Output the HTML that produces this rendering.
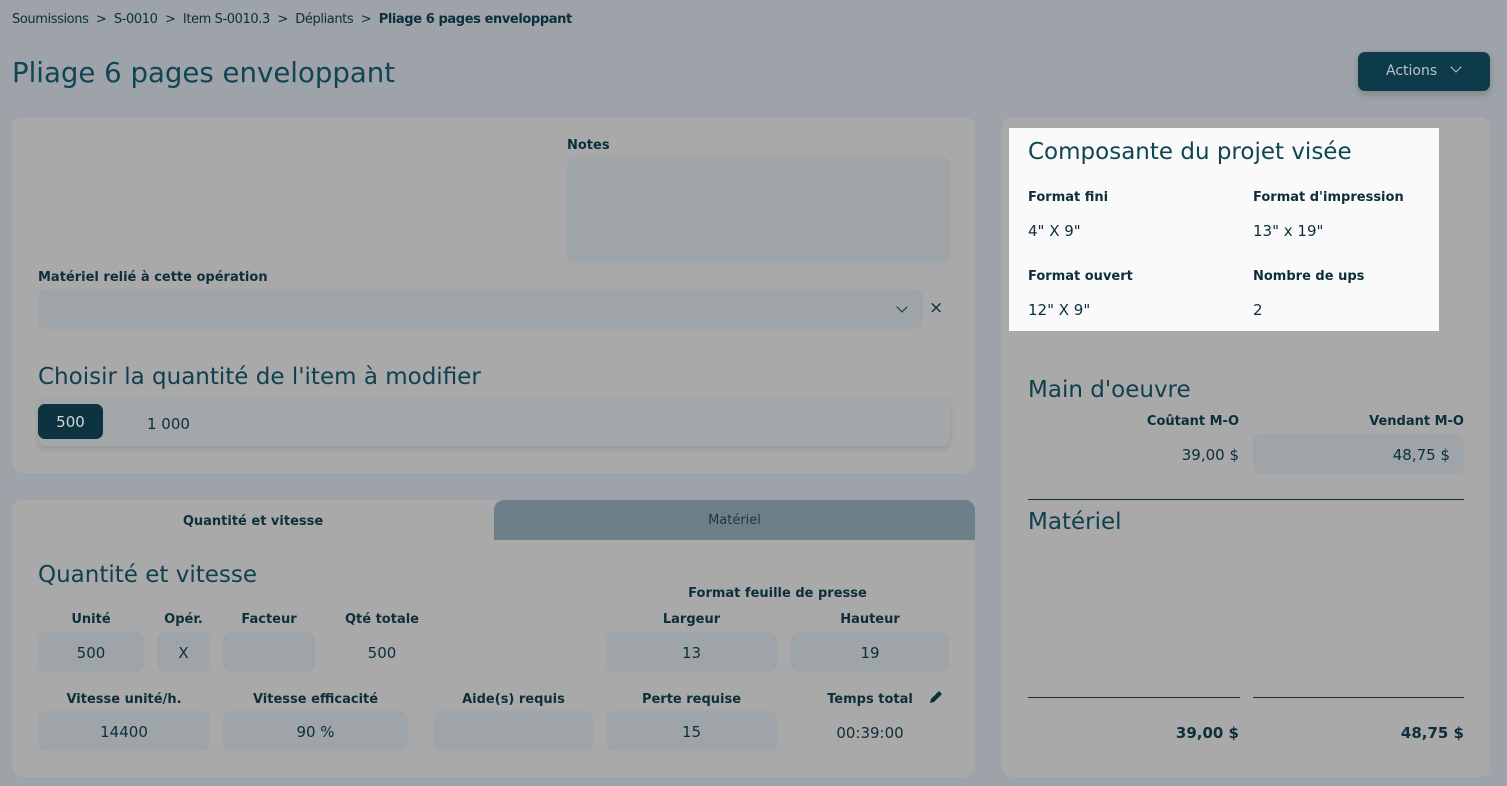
<!DOCTYPE html><html><head><meta charset="utf-8"><style>
*{box-sizing:border-box;margin:0;padding:0}
body{width:1507px;height:786px;background:#9da3a8;font-family:"DejaVu Sans","Liberation Sans",sans-serif;color:#0c2f3a;position:relative;overflow:hidden}
.a{position:absolute}
.card{position:absolute;background:#a9a9a9;border-radius:10px}
.lb{position:absolute;font-weight:bold;font-size:13px;color:#0c2f3a;white-space:nowrap;margin-top:2px}
.in{position:absolute;background:#9ea4a8;border-radius:8px;font-size:15px;display:flex;align-items:center;justify-content:center;padding-top:2px}
.v{position:absolute;font-size:15px;white-space:nowrap;margin-top:2px}
.h{position:absolute;font-size:23px;color:#0f4050;white-space:nowrap;margin-top:2px}
.c{text-align:center}
</style></head><body>
<div class="a" style="left:12px;top:12px;font-size:13px;white-space:nowrap;letter-spacing:-0.4px">Soumissions &nbsp;&gt;&nbsp; S-0010 &nbsp;&gt;&nbsp; Item S-0010.3 &nbsp;&gt;&nbsp; Dépliants &nbsp;&gt;&nbsp; <b>Pliage 6 pages enveloppant</b></div>
<div class="a" style="left:12px;top:56px;font-size:27.6px;color:#0f4555">Pliage 6 pages enveloppant</div>
<div class="a" style="left:1358px;top:52px;width:132px;height:39px;background:#0e3b4a;border-radius:7px;color:#b9c3c7;font-size:14px;line-height:39px;padding-left:28px;box-shadow:0 3px 8px rgba(0,0,0,.2)">Actions <span style="display:inline-block;width:8px;height:8px;border-right:1.3px solid #b9c3c7;border-bottom:1.3px solid #b9c3c7;transform:rotate(45deg);margin-left:10px;position:relative;top:-4px"></span></div>

<div class="card" style="left:12px;top:117px;width:963px;height:356px"></div>
<div class="lb" style="left:567px;top:136px">Notes</div>
<div class="in" style="left:567px;top:157px;width:383px;height:106px"></div>
<div class="lb" style="left:38px;top:268px">Matériel relié à cette opération</div>
<div class="in" style="left:38px;top:289px;width:885px;height:40px"></div>
<div class="a" style="left:898px;top:303px;width:8px;height:8px;border-right:1.5px solid #0c2f3a;border-bottom:1.5px solid #0c2f3a;transform:rotate(45deg)"></div>
<div class="a" style="left:929px;top:298px;font-size:17px">×</div>
<div class="h" style="left:38px;top:362px">Choisir la quantité de l'item à modifier</div>
<div class="a" style="left:38px;top:396px;width:912px;height:50px;background:#a3a7aa;border-radius:8px;box-shadow:0 3px 6px rgba(0,0,0,.12)"></div>
<div class="a" style="left:38px;top:404px;width:65px;height:35px;background:#0e3340;border-radius:7px;color:#cfd6d9;font-size:15px;line-height:37px;text-align:center">500</div>
<div class="v" style="left:147px;top:413px">1 000</div>

<div class="card" style="left:12px;top:500px;width:963px;height:277px"></div>
<div class="a" style="left:494px;top:500px;width:481px;height:40px;background:#6d808a;border-radius:10px 10px 0 0;font-size:13px;line-height:42px;text-align:center;color:#1d3540">Matériel</div>
<div class="lb" style="left:12px;top:512px;width:482px;text-align:center">Quantité et vitesse</div>
<div class="h" style="left:38px;top:560px">Quantité et vitesse</div>
<div class="lb" style="left:606px;top:584px;width:343px;text-align:center">Format feuille de presse</div>
<div class="lb c" style="left:38px;top:610px;width:106px">Unité</div>
<div class="lb c" style="left:157px;top:610px;width:53px">Opér.</div>
<div class="lb c" style="left:223px;top:610px;width:92px">Facteur</div>
<div class="lb c" style="left:330px;top:610px;width:104px">Qté totale</div>
<div class="lb c" style="left:606px;top:610px;width:171px">Largeur</div>
<div class="lb c" style="left:791px;top:610px;width:158px">Hauteur</div>
<div class="in" style="left:38px;top:632px;width:106px;height:40px">500</div>
<div class="in" style="left:157px;top:632px;width:53px;height:40px">X</div>
<div class="in" style="left:223px;top:632px;width:92px;height:40px"></div>
<div class="v c" style="left:330px;top:642px;width:104px">500</div>
<div class="in" style="left:606px;top:632px;width:171px;height:40px">13</div>
<div class="in" style="left:791px;top:632px;width:158px;height:40px">19</div>
<div class="lb c" style="left:38px;top:690px;width:172px">Vitesse unité/h.</div>
<div class="lb c" style="left:223px;top:690px;width:185px">Vitesse efficacité</div>
<div class="lb c" style="left:434px;top:690px;width:159px">Aide(s) requis</div>
<div class="lb c" style="left:606px;top:690px;width:171px">Perte requise</div>
<div class="lb c" style="left:791px;top:690px;width:158px">Temps total</div>
<svg class="a" style="left:928px;top:689px" width="16" height="16" viewBox="0 0 16 16"><path d="M2 14l1-4 8-8 3 3-8 8z" fill="#0c2f3a"/></svg>
<div class="in" style="left:38px;top:711px;width:172px;height:40px">14400</div>
<div class="in" style="left:223px;top:711px;width:185px;height:40px">90 %</div>
<div class="in" style="left:434px;top:711px;width:159px;height:40px"></div>
<div class="in" style="left:606px;top:711px;width:171px;height:40px">15</div>
<div class="v c" style="left:791px;top:722px;width:158px">00:39:00</div>

<div class="card" style="left:1002px;top:117px;width:488px;height:660px"></div>
<div class="a" style="left:1009px;top:128px;width:430px;height:203px;background:#fafafa"></div>
<div class="h" style="left:1028px;top:137px;color:#0f4555">Composante du projet visée</div>
<div class="lb" style="left:1028px;top:188px">Format fini</div>
<div class="lb" style="left:1253px;top:188px">Format d'impression</div>
<div class="v" style="left:1028px;top:220px">4" X 9"</div>
<div class="v" style="left:1253px;top:220px">13" x 19"</div>
<div class="lb" style="left:1028px;top:267px">Format ouvert</div>
<div class="lb" style="left:1253px;top:267px">Nombre de ups</div>
<div class="v" style="left:1028px;top:299px">12" X 9"</div>
<div class="v" style="left:1253px;top:299px">2</div>
<div class="h" style="left:1028px;top:375px">Main d'oeuvre</div>
<div class="lb" style="left:1028px;top:412px;width:211px;text-align:right">Coûtant M-O</div>
<div class="lb" style="left:1253px;top:412px;width:211px;text-align:right">Vendant M-O</div>
<div class="v" style="left:1028px;top:444px;width:211px;text-align:right">39,00 $</div>
<div class="in" style="left:1253px;top:434px;width:211px;height:40px;justify-content:flex-end;padding-right:14px">48,75 $</div>
<div class="a" style="left:1028px;top:499px;width:436px;height:1px;background:#0c2f3a"></div>
<div class="h" style="left:1028px;top:507px">Matériel</div>
<div class="a" style="left:1028px;top:697px;width:212px;height:1px;background:#0c2f3a"></div>
<div class="a" style="left:1253px;top:697px;width:211px;height:1px;background:#0c2f3a"></div>
<div class="v" style="left:1028px;top:722px;width:211px;text-align:right;font-weight:bold">39,00 $</div>
<div class="v" style="left:1253px;top:722px;width:211px;text-align:right;font-weight:bold">48,75 $</div>
</body></html>
